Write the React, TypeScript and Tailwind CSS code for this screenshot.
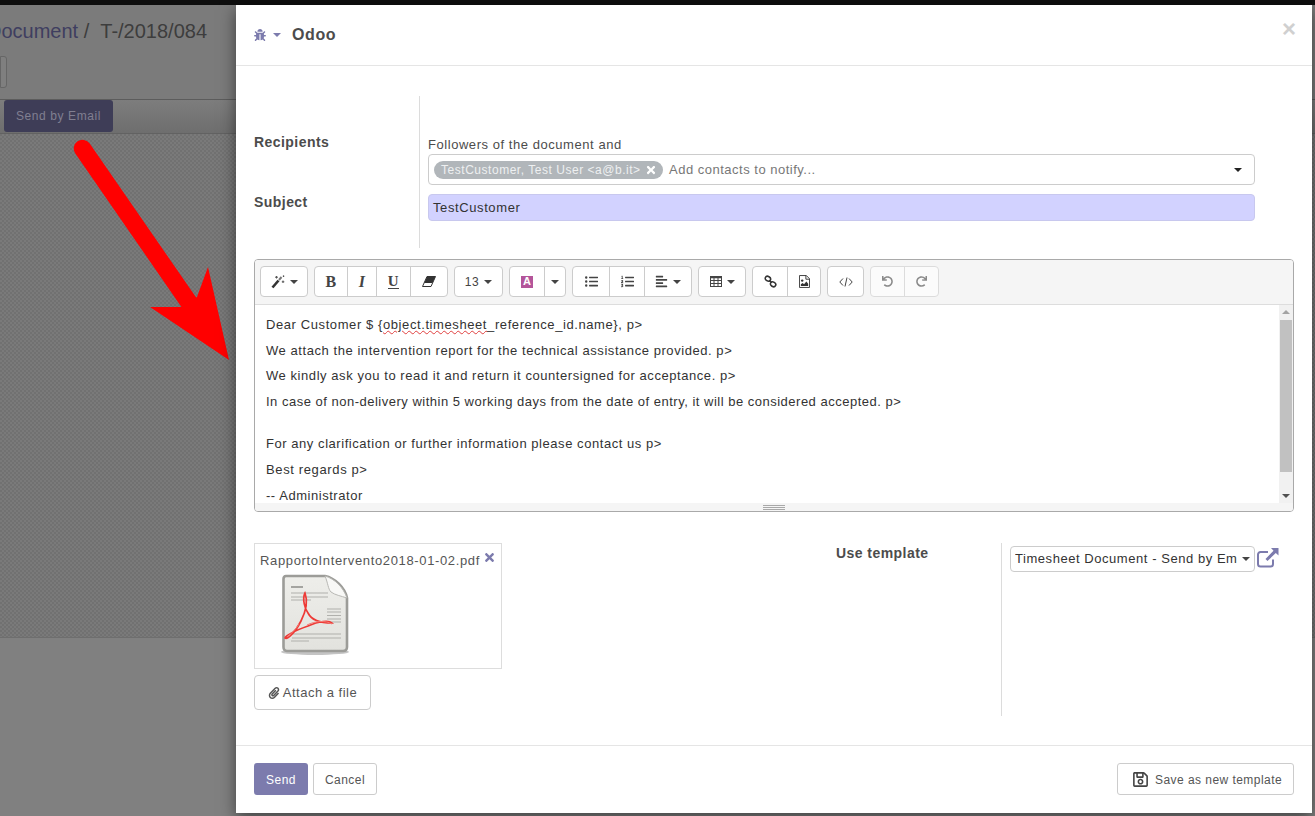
import React from "react";
import { FaBug, FaListUl, FaListOl, FaAlignLeft, FaUndo, FaRedo, FaPaperclip, FaRegSave, FaTimes } from "react-icons/fa";

function Caret({ className = "" }: { className?: string }) {
  return <span className={"inline-block w-0 h-0 border-x-[4px] border-t-[4px] border-x-transparent border-t-current " + className} />;
}

function Btn({ w, children, last = false }: { w: string; children: React.ReactNode; last?: boolean }) {
  return (
    <div className={w + " h-full flex items-center justify-center gap-[5px] text-[#444] " + (last ? "" : "border-r border-[#ccc]")}>
      {children}
    </div>
  );
}

function Group({ children, muted = false }: { children: React.ReactNode; muted?: boolean }) {
  return (
    <div className={"h-[31px] flex bg-white border border-[#ccc] rounded-[4px] " + (muted ? "opacity-60" : "")}>{children}</div>
  );
}

function WandIcon() {
  return (
    <svg width="14" height="14" viewBox="0 0 14 14" fill="none">
      <path d="M1.5 12.5L7.5 5.5" stroke="#333" strokeWidth="2.6" />
      <path d="M8 5L10.5 2" stroke="#777" strokeWidth="2" />
      <path d="M5.5 1V3.5M4 2.2H7M12 5.5V8M10.8 6.8H13.3M12.5 .5V2M11.8 1.2H13.3" stroke="#555" strokeWidth="1" />
    </svg>
  );
}

function EraserIcon() {
  return (
    <svg width="14" height="11" viewBox="0 0 14 11">
      <path d="M5 .5H13.5L9 10.5H.5Z" fill="#fff" stroke="#333" strokeWidth="1" />
      <path d="M5 .5H13.5L10.5 7H2.2Z" fill="#333" />
    </svg>
  );
}

function TableIcon() {
  return (
    <svg width="12" height="11" viewBox="0 0 12 11" fill="none" stroke="#444" strokeWidth="1">
      <rect x="0.5" y="0.5" width="11" height="10" />
      <path d="M0.5 1.5H11.5" strokeWidth="1.6" />
      <path d="M0.5 4.5H11.5M0.5 7.5H11.5M4 1V10.5M8 1V10.5" />
    </svg>
  );
}

function LinkIcon() {
  return (
    <svg width="13" height="13" viewBox="0 0 14 14" fill="none" stroke="#333" strokeWidth="1.7">
      <ellipse cx="4.2" cy="4" rx="3" ry="2.4" transform="rotate(30 4.2 4)" />
      <ellipse cx="9.8" cy="10" rx="3" ry="2.4" transform="rotate(30 9.8 10)" />
      <path d="M5.5 6L8.5 8" />
    </svg>
  );
}

function PicIcon() {
  return (
    <svg width="11" height="13" viewBox="0 0 12 14">
      <path d="M1 .5H8L11.5 4V13.5H.5V.5Z" fill="none" stroke="#333" strokeWidth="1" />
      <path d="M7.5.5V4.5H11.5" fill="none" stroke="#333" strokeWidth="1" />
      <circle cx="3.5" cy="6" r="1.3" fill="#333" />
      <path d="M2 12V10L4 8.5L5.5 10L8 7L10 9.5V12Z" fill="#333" />
    </svg>
  );
}

function CodeIcon() {
  return (
    <svg width="14" height="10" viewBox="0 0 14 10" fill="none" stroke="#444" strokeWidth="1">
      <path d="M4 1.5L.8 5L4 8.5M10 1.5L13.2 5L10 8.5M8 .5L6 9.5" />
    </svg>
  );
}

function ExternalIcon() {
  return (
    <svg width="22" height="20" viewBox="0 0 22 20" fill="none">
      <path d="M16 11.5V16A2.5 2.5 0 0 1 13.5 18.5H3.5A2.5 2.5 0 0 1 1 16V6.5A2.5 2.5 0 0 1 3.5 4H11" stroke="#7c7bad" strokeWidth="2" />
      <path d="M14 0H21.5V7.5L18.8 5L10.5 13L8.5 11L16.5 2.7Z" fill="#7c7bad" />
    </svg>
  );
}

function PdfIcon() {
  return (
    <svg className="blur-[0.4px]" width="72" height="84" viewBox="0 0 72 84">
      <defs>
        <linearGradient id="pg" x1="0" y1="0" x2="0" y2="1">
          <stop offset="0" stopColor="#eeeeea" />
          <stop offset="1" stopColor="#e2e2de" />
        </linearGradient>
      </defs>
      <ellipse cx="34" cy="79" rx="34" ry="3" fill="#c4c4c4" />
      <path d="M5 3H44C54 5 64 15 66 25V74Q66 78 62 78H6Q2.500 78 2.500 74V6Q2.500 3 5 3Z" fill="url(#pg)" stroke="#9c9c98" strokeWidth="2.6" />
      <path d="M44 3C47 10 47 16 50 19C54 22 60 23 66 25C62 14 54 6 44 3Z" fill="#f8f8f6" stroke="#b8b8b4" strokeWidth="1" />
      <g stroke="#b0b0ac" strokeWidth="1.2">
        <path d="M10 14H22" stroke="#8c8c88" strokeWidth="1.5" />
        <path d="M10 20H47M10 24H47M10 27H30" />
        <path d="M46 36H60M46 39H60M46 42.500H60M46 46H60M46 49H60" />
        <path d="M11 61H60M11 65H60M10 68H28" />
      </g>
      <path
        d="M24 20C21 26 24 36 27 40C31 48 42 50 51 50C48 47 38 48 27 53C16 57 5 62 4 65C6 67 14 60 20 48C25 38 27 28 24 20Z"
        fill="none"
        stroke="#ee3a36"
        strokeWidth="1.7"
      />
      <path d="M26 52C34 48 44 47 51 51M6 64C10 61 15 56 18 51" fill="none" stroke="#f47a74" strokeWidth="1" />
    </svg>
  );
}

const lines: [string, string][] = [
  ["We attach the intervention report for the technical assistance provided. p>", "tracking-[0.56px]"],
  ["We kindly ask you to read it and return it countersigned for acceptance. p>", "tracking-[0.56px]"],
  ["In case of non-delivery within 5 working days from the date of entry, it will be considered accepted. p>", "tracking-[0.5px] mb-[16.9px]"],
  ["For any clarification or further information please contact us p>", "tracking-[0.55px]"],
  ["Best regards p>", "tracking-[0.63px] mb-[0.6px]"],
  ["-- Administrator", "tracking-[0.54px]"],
];

export default function App() {
  return (
    <div className="relative w-[1315px] h-[816px] overflow-hidden flex flex-col bg-[#808080] font-['Liberation_Sans',sans-serif] text-[13px] tracking-[0.5px] text-[#4c4c4c]">
      {/* background page */}
      <div className="h-[5px] bg-[#0e0e0e] shrink-0" />
      <div className="h-[95px] shrink-0 bg-[#7b7b7b] border-b border-[#5c5c5c] flex flex-col">
        <div className="-ml-[13px] mt-[14px] h-[24px] text-[20px] leading-[24px] tracking-normal text-[#3d3d3d] whitespace-pre">
          <span className="text-[#3f3e60]">Document</span>
          <span> /</span>
          <span className="ml-[11px]">T-/2018/084</span>
        </div>
        <div className="mt-[13px] w-[7px] h-[32px] border border-[#666] rounded-r-[3px] bg-[#7f7f7f]" />
      </div>
      <div className="h-[34px] shrink-0 border-b border-[#626262] bg-gradient-to-b from-[#7d7d7d] to-[#6e6e6e] pl-[4px]">
        <div className="w-[109px] h-[32px] rounded-[3px] bg-[#3e3d57] text-[#807f91] flex items-center justify-center text-[12px] tracking-[0.6px]">
          Send by Email
        </div>
      </div>
      <div className="h-[504px] shrink-0 border-b border-[#6e6e6e] bg-[repeating-conic-gradient(#7a7a7a_0_25%,#717171_0_50%)] bg-size-[4px_4px]" />
      <div className="flex-1 bg-[#808080]" />

      {/* annotation arrow */}
      <svg className="absolute left-0 top-0 pointer-events-none" width="240" height="370" viewBox="0 0 240 370">
        <path d="M82.5 148.5L190 304" stroke="#ff0000" strokeWidth="17.5" strokeLinecap="round" fill="none" />
        <path d="M229 360L208 267L197 297L182 307L150 307Z" fill="#ff0000" />
      </svg>

      {/* modal */}
      <div className="absolute left-[236px] top-[5px] w-[1076px] h-[808px] bg-white flex flex-col shadow-[0_5px_15px_rgba(0,0,0,0.5)]">
        <header className="h-[61px] shrink-0 border-b border-[#e5e5e5] flex items-center pl-[18px] pr-[18px]">
          <FaBug className="text-[#7c7bad] text-[12px]" />
          <Caret className="ml-[7px] text-[#7c7bad]" />
          <span className="ml-[11px] text-[16px] font-bold text-[#4c4c4c] tracking-[0.6px]">Odoo</span>
          <span className="ml-auto mr-[-2px] -mt-[12px] text-[24px] font-bold leading-none text-[#d0d0d0] tracking-normal">×</span>
        </header>

        <div className="flex-1 px-[18px] pt-[30px]">
          {/* recipients / subject */}
          <div className="flex h-[152px]">
            <div className="w-[166px] border-r border-[#dcdcdc] pt-[36px] font-bold text-[14px] tracking-[0.45px]">
              <div className="h-[20px] leading-[20px]">Recipients</div>
              <div className="mt-[40px] h-[20px] leading-[20px]">Subject</div>
            </div>
            <div className="w-[835px] pl-[8px] pt-[41px]">
              <div className="h-[16px] leading-[16px] tracking-[0.55px]">Followers of the document and</div>
              <div className="mt-[1px] h-[31px] border border-[#ccc] rounded-[4px] flex items-center pl-[5px] pr-[12px]">
                <span className="h-[18px] w-[229px] rounded-full bg-[#b1b6ba] text-[#eef0f1] text-[12px] tracking-[0.53px] flex items-center pl-[7px] gap-[4px] whitespace-nowrap">
                  TestCustomer, Test User &lt;a@b.it&gt; <FaTimes className="text-white text-[12px]" />
                </span>
                <span className="ml-[6px] text-[#777]">Add contacts to notify...</span>
                <Caret className="ml-auto text-[#222]" />
              </div>
              <div className="mt-[9px] h-[27px] rounded-[4px] bg-[#d2d2ff] border border-[#c8c8ee] flex items-center pl-[4px] text-[#333] tracking-[0.6px]">
                TestCustomer
              </div>
            </div>
          </div>

          {/* editor */}
          <div className="mt-[11px] w-[1040px] h-[253px] border border-[#a9a9a9] rounded-[4px] flex flex-col overflow-hidden">
            <div className="h-[45px] shrink-0 bg-[#f5f5f5] border-b border-[#ddd] pl-[5px] pt-[6px] flex gap-[6px]">
              <Group><Btn w="w-[46px]" last><WandIcon /><Caret /></Btn></Group>
              <Group>
                <Btn w="w-[33px]"><span className="font-['Liberation_Serif',serif] font-bold text-[16px]">B</span></Btn>
                <Btn w="w-[29px]"><span className="font-['Liberation_Serif',serif] italic font-bold text-[16px]">I</span></Btn>
                <Btn w="w-[34px]"><span className="font-['Liberation_Serif',serif] font-bold text-[15px] leading-[14px] border-b border-[#444]">U</span></Btn>
                <Btn w="w-[36px]" last><EraserIcon /></Btn>
              </Group>
              <Group><Btn w="w-[47px]" last><span className="text-[12px]">13</span><Caret /></Btn></Group>
              <Group>
                <Btn w="w-[35px]"><span className="w-[12px] h-[12px] bg-[#b4559a] text-white text-[11px] font-bold flex items-center justify-center tracking-normal">A</span></Btn>
                <Btn w="w-[20px]" last><Caret /></Btn>
              </Group>
              <Group>
                <Btn w="w-[37px]"><FaListUl className="text-[13px]" /></Btn>
                <Btn w="w-[35px]"><FaListOl className="text-[13px]" /></Btn>
                <Btn w="w-[46px]" last><FaAlignLeft className="text-[13px]" /><Caret /></Btn>
              </Group>
              <Group><Btn w="w-[46px]" last><TableIcon /><Caret /></Btn></Group>
              <Group>
                <Btn w="w-[35px]"><LinkIcon /></Btn>
                <Btn w="w-[32px]" last><PicIcon /></Btn>
              </Group>
              <Group><Btn w="w-[35px]" last><CodeIcon /></Btn></Group>
              <Group muted>
                <Btn w="w-[34px]"><FaUndo className="text-[11px]" /></Btn>
                <Btn w="w-[33px]" last><FaRedo className="text-[11px]" /></Btn>
              </Group>
            </div>
            <div className="flex-1 min-h-0 flex overflow-hidden">
              <div className="flex-1 overflow-hidden pl-[11px] pt-[10px] text-[#333] whitespace-nowrap leading-[19px]">
                <p className="h-[25.6px] tracking-[0.59px]">
                  Dear Customer $ {"{"}
                  <span className="underline decoration-wavy decoration-[#e04040] decoration-1">object.timesheet</span>
                  _reference_id.name{"}"}, p&gt;
                </p>
                {lines.map(([t, c]) => (
                  <p key={t} className={"h-[25.6px] " + c}>{t}</p>
                ))}
              </div>
              <div className="w-[14px] shrink-0 bg-[#f1f1f1] flex flex-col items-center">
                <span className="mt-[5px] w-0 h-0 border-x-[4px] border-b-[4px] border-x-transparent border-b-[#a3a3a3]" />
                <div className="mt-[6px] w-[12px] h-[152px] bg-[#c1c1c1]" />
                <Caret className="mt-auto mb-[5px] text-[#505050]" />
              </div>
            </div>
            <div className="h-[8px] shrink-0 bg-[#f5f5f5] flex flex-col items-center justify-center gap-[1px]">
              <div className="w-[22px] h-px bg-[#a9a9a9]" />
              <div className="w-[22px] h-px bg-[#a9a9a9]" />
              <div className="w-[22px] h-px bg-[#a9a9a9]" />
            </div>
          </div>

          {/* attachments + template */}
          <div className="mt-[31px] flex h-[173px]">
            <div className="w-[248px]">
              <div className="h-[126px] border border-[#ddd] pl-[5px] pt-[9px] relative">
                <div className="h-[16px] leading-[16px] text-[#555] tracking-[0.64px] whitespace-nowrap">RapportoIntervento2018-01-02.pdf</div>
                <FaTimes className="absolute right-[5px] top-[7px] text-[#7c7bad] text-[13px]" />
                <div className="ml-[21px] mt-[4px]"><PdfIcon /></div>
              </div>
              <div className="mt-[6px] w-[117px] h-[35px] pt-px border border-[#ccc] rounded-[4px] flex items-center justify-center gap-[3px] text-[#555]">
                <FaPaperclip className="text-[12px]" /> Attach a file
              </div>
            </div>
            <div className="ml-[334px] w-[166px] border-r border-[#dcdcdc] pt-[1px] font-bold text-[14px] tracking-[0.45px]">
              <div className="h-[18px] leading-[18px]">Use template</div>
            </div>
            <div className="pl-[8px] pt-[3px] flex items-start">
              <div className="w-[245px] h-[26px] border border-[#ccc] rounded-[4px] flex items-center pl-[4px] pr-[4px] text-[#333] tracking-[0.55px] whitespace-nowrap overflow-hidden">
                <span className="w-[227px] overflow-hidden">Timesheet Document - Send by Em</span>
                <Caret className="ml-auto text-[#444]" />
              </div>
              <div className="ml-[2px] mt-[2px]"><ExternalIcon /></div>
            </div>
          </div>
        </div>

        <footer className="h-[68px] shrink-0 border-t border-[#e5e5e5] px-[18px] pt-[17px] flex text-[12px] tracking-[0.45px]">
          <div className="w-[54px] h-[32px] pt-px rounded-[3px] bg-[#7c7bad] text-white flex items-center justify-center">Send</div>
          <div className="ml-[5px] w-[64px] h-[32px] pt-px rounded-[3px] border border-[#ccc] text-[#555] flex items-center justify-center">Cancel</div>
          <div className="ml-auto w-[177px] h-[32px] pt-px rounded-[3px] border border-[#ccc] text-[#555] flex items-center pl-[14px] gap-[6px] whitespace-nowrap">
            <FaRegSave className="text-[17px] text-[#444]" /> Save as new template
          </div>
        </footer>
      </div>
    </div>
  );
}
